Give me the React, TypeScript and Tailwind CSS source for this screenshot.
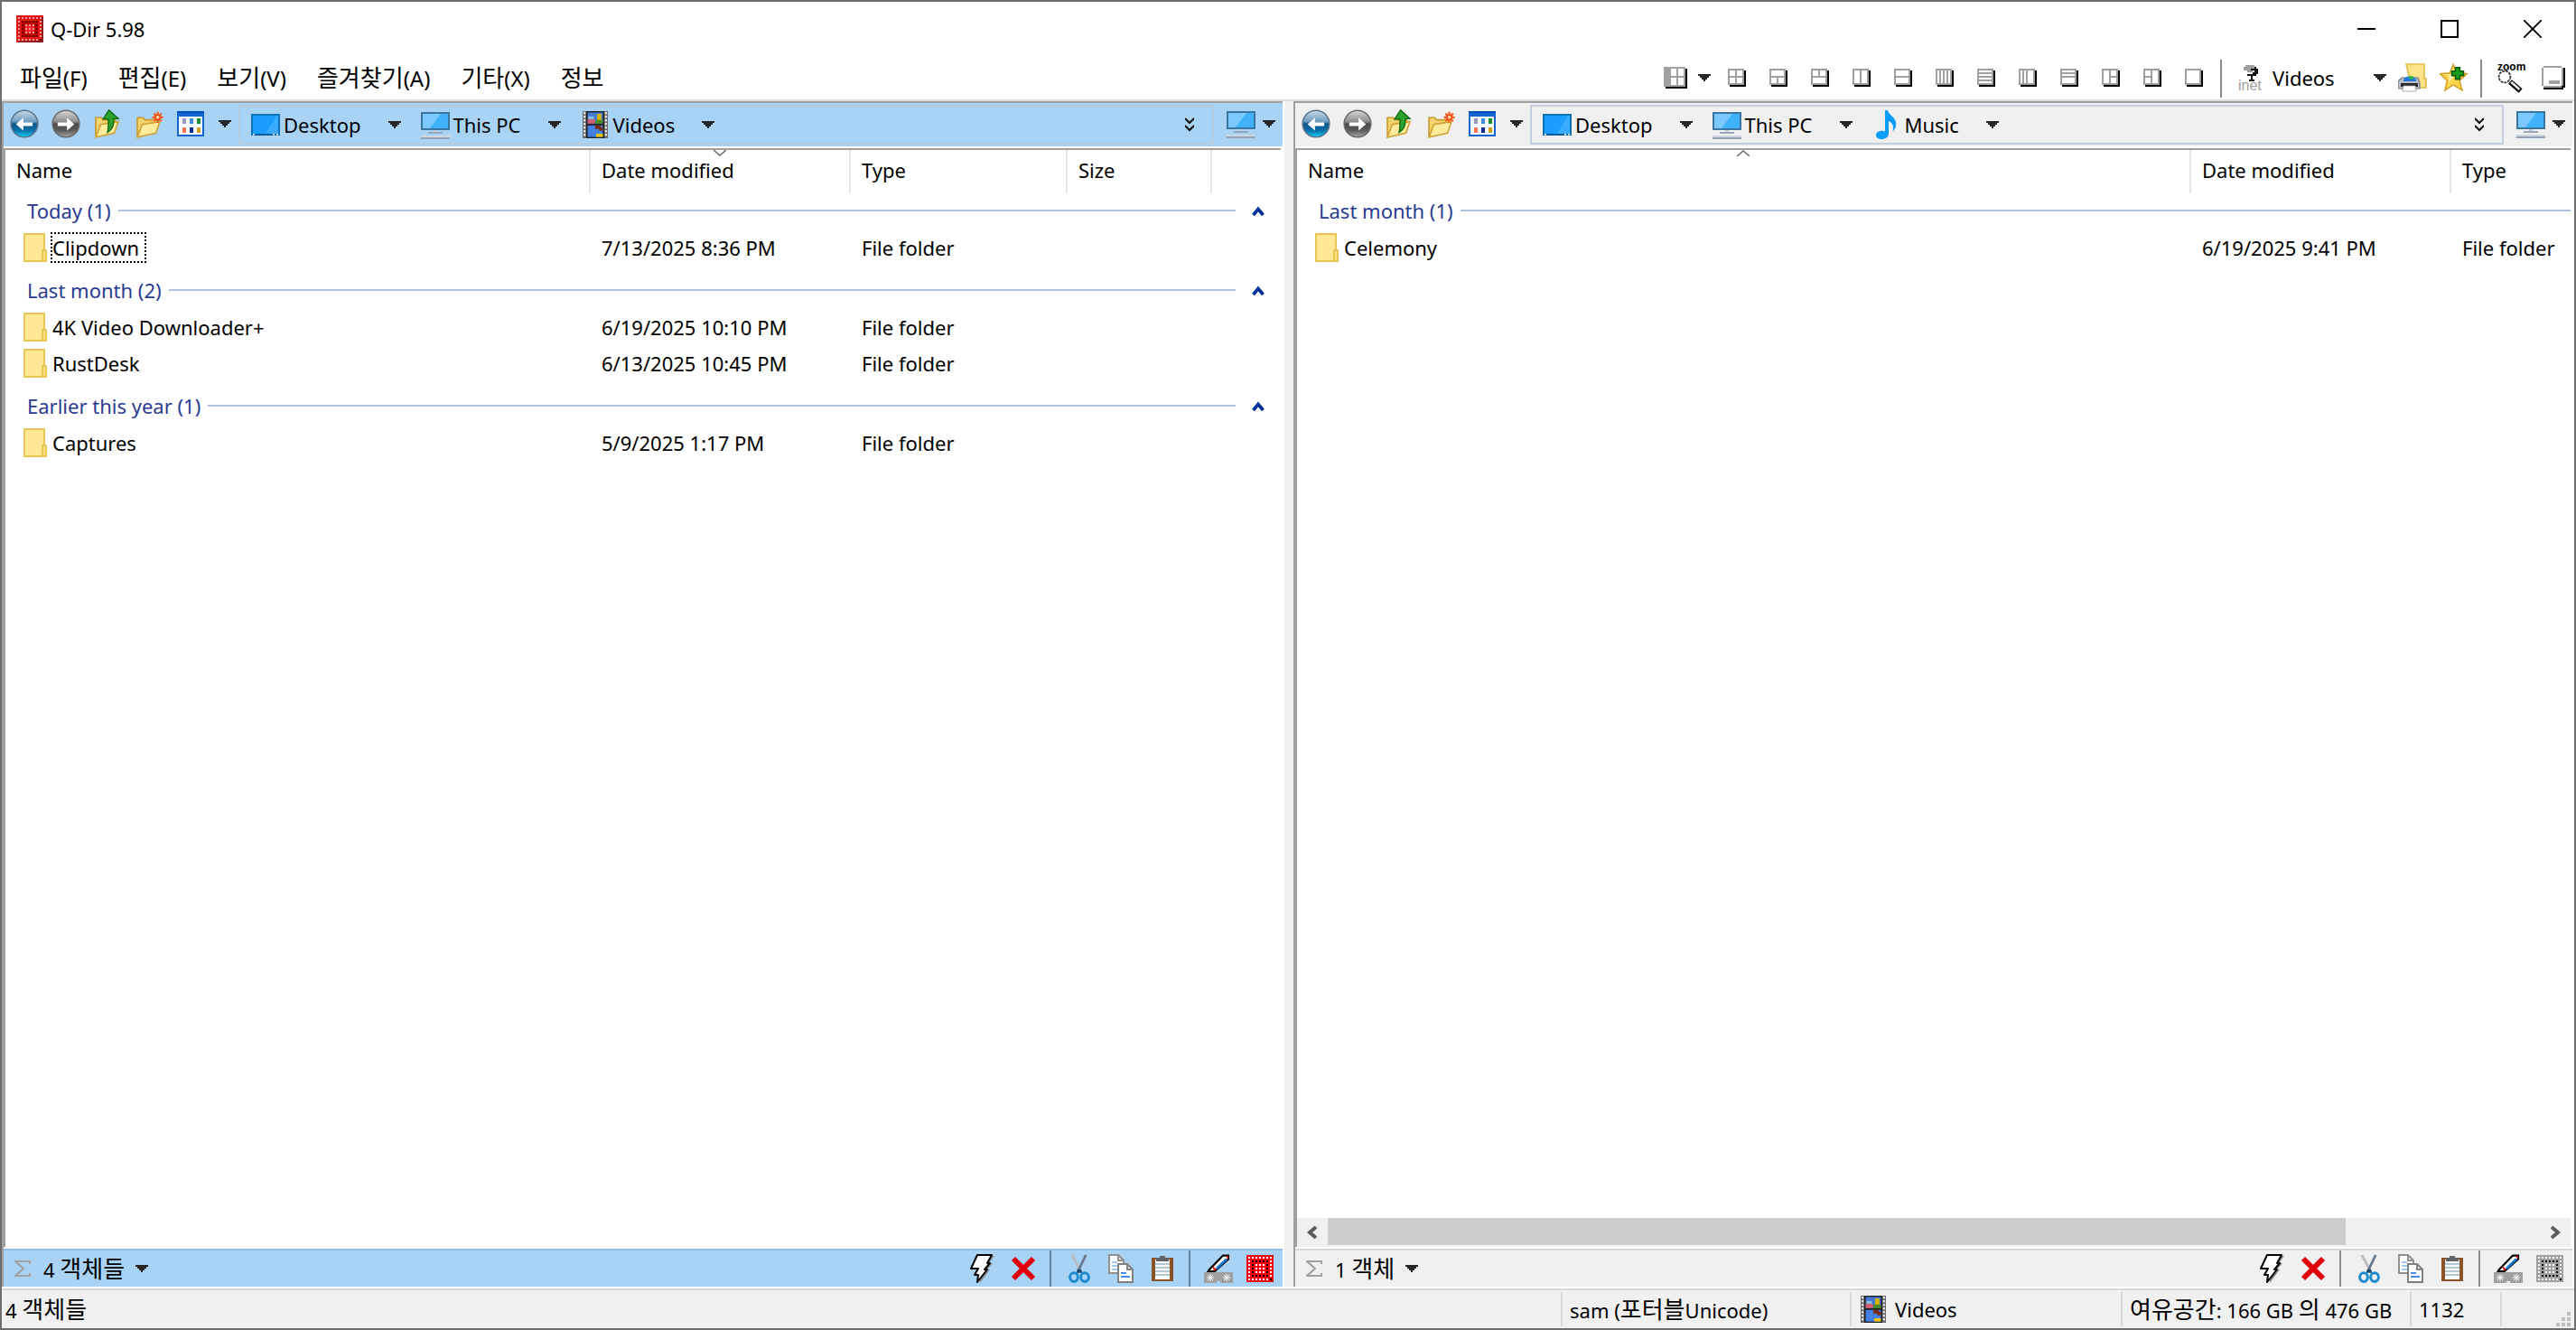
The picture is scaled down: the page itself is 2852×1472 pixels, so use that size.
import type { ReactNode } from "react";

type IconProps = { className?: string };

type FileRow = { name: string; date: string; type: string; focused?: boolean };
type Group = { label: string; rows: FileRow[] };
type Crumb = { label: string; icon: ReactNode };

type PaneProps = {
  active?: boolean;
  crumbs: Crumb[];
  groups: Group[];
  sort: "name" | "date";
  count: ReactNode;
};

/* ---------- icons, drawn on a 16px grid and shown at 32px ---------- */

function Icon({ children, className = "h-8 w-8" }: IconProps & { children: ReactNode }) {
  return (
    <svg viewBox="0 0 16 16" className={`block shrink-0 ${className}`} aria-hidden="true">
      {children}
    </svg>
  );
}

function CaretDown() {
  return (
    <svg viewBox="0 0 7 4" className="block h-2 w-3.5 shrink-0" shapeRendering="crispEdges" aria-hidden="true">
      <path d="M0 0h7v1H0zM1 1h5v1H1zM2 2h3v1H2zM3 3h1v1H3z" fill="#262626" />
    </svg>
  );
}

const DOTS = [1, 3, 5, 7, 9, 11, 13];

function QLogo({ tone }: { tone: "title" | "red" | "gray" }) {
  const back = tone === "gray" ? "#a0a0a0" : tone === "red" ? "#f00008" : "#e01414";
  const light = tone === "title" ? "#ff9a9a" : "#ffffff";
  const dark = tone === "title" ? "#7a0000" : "#000000";
  const fill = (x: number, y: number) => {
    if (x === 13 && y === 13) return dark;
    if (x === 1 || x === 13 || y === 1 || y === 13) return light;
    if (x === 3 || x === 11 || y === 3 || y === 11) return dark;
    return light;
  };
  return (
    <svg viewBox="0 0 15 15" className="block h-[30px] w-[30px] shrink-0" shapeRendering="crispEdges" aria-hidden="true">
      <rect width="15" height="15" fill={back} />
      {tone === "title" && (
        <>
          <path d="M3 3h9v9H3z" fill="#b00000" />
          <path d="M5 5h5v5H5z" fill="#f02020" />
          <path d="M14 1h1v14H1v-1h13z" fill="#8c2020" />
        </>
      )}
      {DOTS.map((y) =>
        DOTS.map((x) => <rect key={`${x}-${y}`} x={x} y={y} width="1" height="1" fill={fill(x, y)} />)
      )}
    </svg>
  );
}

function BackIcon() {
  return (
    <Icon>
      <defs>
        <linearGradient id="back" x1="0" y1="0" x2="0" y2="1">
          <stop offset="0" stopColor="#c9dbe8" />
          <stop offset="0.42" stopColor="#6c9cc0" />
          <stop offset="0.5" stopColor="#0d5688" />
          <stop offset="0.75" stopColor="#0a70a8" />
          <stop offset="1" stopColor="#10d4ff" />
        </linearGradient>
      </defs>
      <circle cx="8" cy="8" r="7.4" fill="url(#back)" stroke="#5b7488" strokeWidth="0.8" />
      <path d="M3.4 8.2 7.4 4.6v2.6h5.2v2H7.4v2.6z" fill="#fff" />
    </Icon>
  );
}

function ForwardIcon() {
  return (
    <Icon>
      <defs>
        <linearGradient id="forward" x1="0" y1="0" x2="0" y2="1">
          <stop offset="0" stopColor="#d8d8d8" />
          <stop offset="0.42" stopColor="#8c8c8c" />
          <stop offset="0.5" stopColor="#4a4a4a" />
          <stop offset="0.75" stopColor="#5c5c5c" />
          <stop offset="1" stopColor="#a8a8a8" />
        </linearGradient>
      </defs>
      <circle cx="8" cy="8" r="7.4" fill="url(#forward)" stroke="#6a6a6a" strokeWidth="0.8" />
      <path d="M12.6 8.2 8.6 4.6v2.6H3.4v2h5.2v2.6z" fill="#fff" />
    </Icon>
  );
}

function OpenFolder() {
  return (
    <>
      <path d="M1.5 15.3V4.6h3.2l1 1.2h6.6v3" fill="#f3d36b" stroke="#c99a2c" strokeWidth="0.8" />
      <path d="M1.6 15.4 4.2 8.4l9.8-1.6-2.2 6.4z" fill="#ffeb9c" stroke="#cfa136" strokeWidth="0.8" />
    </>
  );
}

function UpIcon() {
  return (
    <Icon>
      <OpenFolder />
      <path d="M8.8 0.4 14 5.2h-2.6c.2 3.6-.4 5.8-3.4 7.6.6-2.6.6-4.6.4-7.4H5.6z" fill="#2da32d" stroke="#126b12" strokeWidth="0.7" />
    </Icon>
  );
}

function NewFolderIcon() {
  return (
    <Icon>
      <OpenFolder />
      <g stroke="#ff5a1e" strokeWidth="1.1">
        <path d="M12.8 1.4v6M9.8 4.4h6M10.7 2.3l4.2 4.2M14.9 2.3l-4.2 4.2" />
      </g>
      <circle cx="12.8" cy="4.4" r="1.3" fill="#ffd09a" stroke="#e83c10" strokeWidth="0.6" />
    </Icon>
  );
}

function ViewIcon() {
  const cells = [
    ["#9a9ac8", 3, 5],
    ["#3c8ce0", 7, 5],
    ["#109030", 11, 5],
    ["#ff7850", 3, 10],
    ["#102c90", 7, 10],
    ["#d0a018", 11, 10]
  ] as const;
  return (
    <svg viewBox="0 0 15 14" className="block h-7 w-[30px] shrink-0" shapeRendering="crispEdges" aria-hidden="true">
      <rect width="15" height="14" fill="#1464d0" />
      <rect x="1" y="3" width="13" height="10" fill="#f4f9ff" />
      <rect width="15" height="1" fill="#0050c0" />
      {cells.map(([color, x, y]) => (
        <rect key={color} x={x} y={y - 1} width="2" height="3" fill={color} />
      ))}
    </svg>
  );
}

function DesktopIcon() {
  return (
    <Icon>
      <rect x="0.5" y="2.5" width="15" height="11" fill="#1a9dfc" stroke="#0b72b8" />
      <path d="M8 13 14 3h1v10z" fill="#38adff" />
      <path d="M1 13h14v1H1z" fill="#0a5c9c" />
      <path d="M1 13h1v.8H1zM12 13h1v.8h-1zM14 13h1v.8h-1z" fill="#fff" />
    </Icon>
  );
}

function MonitorIcon() {
  return (
    <Icon>
      <rect x="0.5" y="1.5" width="15" height="9" fill="#3fb2fb" stroke="#3a76a0" />
      <path d="M1 2h10L5 10H1z" fill="#7cc9ff" />
      <path d="M7 11h2v1H7z" fill="#c4ccd6" />
      <path d="M4 12h8v1H4z" fill="#98a8bc" />
      <path d="M0 14h16v1H0z" fill="#cfd6de" />
      <path d="M0 15h16v1H0z" fill="#94a4b8" />
    </Icon>
  );
}

function FilmIcon() {
  const holes = [1, 3, 5, 7, 9, 11, 13];
  return (
    <Icon>
      <rect x="1" y="0.500" width="14" height="15" fill="#6a6a6a" />
      <rect x="3" y="0.500" width="10" height="15" fill="#222" />
      {holes.map((y) => (
        <g key={y} fill="#f0f0f0">
          <rect x="1.600" y={y} width="1" height="1.200" />
          <rect x="13.400" y={y} width="1" height="1.200" />
        </g>
      ))}
      <rect x="3.800" y="1.200" width="8.400" height="6.200" fill="#4478d4" />
      <rect x="3.800" y="8.400" width="8.400" height="6.400" fill="#4480e4" />
      <path d="M3.800 5h4v2.400h-4z" fill="#d06070" />
      <path d="M4.200 3.400h3v1.600h-3z" fill="#8cc0e0" />
      <path d="M9 2h2.400v4H9z" fill="#d8b400" />
      <path d="M8 5.400h4.200v2H8z" fill="#4a8c20" />
      <path d="M8 8.400h3v1h1.200v2h-2v-1H8z" fill="#7a2c10" />
      <path d="M8.500 13h3.700v1.800H8.500z" fill="#ecc400" />
    </Icon>
  );
}

function MusicIcon() {
  return (
    <Icon>
      <path
        d="M7 0h1.500c.2 2.500 4.600 3.600 4.600 7.600 0 2-.8 3.200-1.900 4.200.6-2.600.5-4.400-2.200-5.800V13c0 1.800-1.700 3-3.900 3C3.400 16 2 15.200 2 13.900 2 12.300 3.600 11.400 5.400 11.400c.6 0 1.200.1 1.600.3z"
        fill="#0a9cff"
      />
    </Icon>
  );
}

function FolderIcon() {
  return (
    <svg viewBox="0 0 13 16" className="block h-8 w-[26px] shrink-0" shapeRendering="crispEdges" aria-hidden="true">
      <path d="M0 0h12v9h1v7H0z" fill="#e8c654" />
      <path d="M1 1h10v8h-1v6H1z" fill="#ffe795" />
      <path d="M11 10h1v5h-1z" fill="#ffe081" />
    </svg>
  );
}

/* window layout pickers: each path is the set of inner split lines */
const LAYOUTS = [
  { title: "4 panes", lines: "M4 1h1v7H4zM1 4h7v1H1z" },
  { title: "3 panes, split bottom", lines: "M1 4h7v1H1zM4 5h1v3H4z" },
  { title: "3 panes, split top", lines: "M1 4h7v1H1zM4 1h1v3H4z" },
  { title: "2 panes, side by side", lines: "M4 1h1v7H4z" },
  { title: "2 panes, stacked", lines: "M1 4h7v1H1z" },
  { title: "4 columns", lines: "M2 1h1v7H2zM4 1h1v7H4zM6 1h1v7H6z" },
  { title: "4 rows", lines: "M1 2h7v1H1zM1 4h7v1H1zM1 6h7v1H1z" },
  { title: "3 columns", lines: "M2 1h1v7H2zM4 1h1v7H4z" },
  { title: "3 rows", lines: "M1 2h7v1H1zM1 4h7v1H1z" },
  { title: "3 panes, split right", lines: "M4 1h1v7H4zM5 4h3v1H5z" },
  { title: "3 panes, split left", lines: "M4 1h1v7H4zM1 4h3v1H1z" },
  { title: "1 pane", lines: "" }
];

function LayoutIcon({ lines }: { lines: string }) {
  return (
    <svg viewBox="0 0 10 10" className="block h-5 w-5" shapeRendering="crispEdges" aria-hidden="true">
      <path d="M1 1h9v9H1z" fill="#000" />
      <path d="M0 0h9v9H0z" fill="#a0a0a0" />
      <path d="M1 1h7v7H1z" fill="#fff" />
      <path d={lines} fill="#a0a0a0" />
    </svg>
  );
}

function TreeLayoutIcon() {
  return (
    <svg viewBox="0 0 13 12" className="block h-6 w-[26px]" shapeRendering="crispEdges" aria-hidden="true">
      <path d="M1 1h12v11H1z" fill="#000" />
      <path d="M0 0h12v11H0z" fill="#a0a0a0" />
      <path d="M4 1h3v4H4zM8 1h3v4H8zM4 6h3v4H4zM8 6h3v4H8z" fill="#fff" />
    </svg>
  );
}

function InetIcon() {
  return (
    <svg viewBox="0 0 16 16" className="block h-8 w-8 shrink-0 overflow-visible" aria-hidden="true">
      <path d="M5 1h5v1h1v2H9v1H6V4H4V2h1z" fill="#a0a0a0" shapeRendering="crispEdges" />
      <path d="M10 2h1v1h1v3h-1v1H9v1H8V7H6V6h3V5h1V4H8V3h2zM8 8h1v1h1v1H7V9h1z" fill="#111" shapeRendering="crispEdges" />
      <text x="1" y="15" fontSize="8" fill="#a0a0a0" fontFamily="Liberation Sans, sans-serif">
        inet
      </text>
    </svg>
  );
}

function PrinterFolderIcon() {
  return (
    <Icon>
      <path d="M4.500 0.500h10v8h1v5h-8z" fill="#ffe387" stroke="#e0bc4c" strokeWidth="0.8" />
      <path d="M2 8h9l1 3v3H0v-4z" fill="#b8bcc4" stroke="#70747c" strokeWidth="0.6" />
      <path d="M3 9c1-2.400 6-2.400 7 0v1H3z" fill="#2478e0" />
      <path d="M6 7.200h2.500v1.600H6z" fill="#28b450" />
      <path d="M1.500 11h9.500v2H1.500z" fill="#282828" />
      <path d="M3 12.500h6.500l.6 3H2.400z" fill="#fff" stroke="#9c9c9c" strokeWidth="0.4" />
    </Icon>
  );
}

function StarPlusIcon() {
  return (
    <Icon>
      <path
        d="M7.600 0.600 9.500 5.400l5.700.4-4.200 3.800 1.500 5.400-4.900-3-4.700 3 1.300-5.400L0.200 5.800l5.500-.4z"
        fill="#ffd54a"
        stroke="#d09a20"
        strokeWidth="0.7"
      />
      <path d="M7.500 2.500 8.600 6.600 5 10.400l.4-3.600L2 6.200l4.400-.2z" fill="#fff4b8" />
      <path d="M8.800 2.400h2.400v2h2v2.400h-2v2H8.800v-2h-2V4.400h2z" fill="#18a018" stroke="#0a580a" strokeWidth="0.8" />
    </Icon>
  );
}

function ZoomIcon() {
  return (
    <svg viewBox="0 0 16 16" className="block h-8 w-8 shrink-0 overflow-visible" aria-hidden="true">
      <text x="0" y="4" fontSize="6" fontWeight="700" fill="#000" fontFamily="Liberation Sans, sans-serif">
        zoom
      </text>
      <circle cx="4" cy="7.500" r="3.200" fill="#fff" stroke="#333" strokeWidth="0.9" strokeDasharray="1.4 0.5" />
      <path d="m7 10.200 5.800 5" stroke="#000" strokeWidth="3" />
      <path d="m7.600 10.400 4.600 4.100" stroke="#e8e8e8" strokeWidth="1.3" />
    </svg>
  );
}

function TrayIcon() {
  return (
    <svg viewBox="0 0 13 13" className="block h-[26px] w-[26px]" shapeRendering="crispEdges" aria-hidden="true">
      <path d="M2 1h11v11h-1v1H1v-2h1z" fill="#000" />
      <path d="M1 0h10v1h1v10h-1v1H1v-1H0V1h1z" fill="#a0a0a0" />
      <path d="M1 1h10v10H1z" fill="#fff" />
      <path d="M4 8h6v2H4z" fill="#a0a0a0" />
    </svg>
  );
}

function BoltIcon() {
  return (
    <Icon>
      <path d="M7 1h8l-3 4h2l-3 3.500h1.500L7 16z" fill="#8c8c8c" />
      <path
        d="M5.500 0.500h8L11 5h1.500L9.500 8.500H11L5.500 15.500 6 11.500H4l2-3.500H2z"
        fill="#fff"
        stroke="#000"
        strokeWidth="1"
        strokeLinejoin="round"
      />
    </Icon>
  );
}

function DeleteIcon() {
  return (
    <Icon>
      <path d="m2.500 2.500 11 11M13.500 2.500l-11 11" stroke="#e0000c" strokeWidth="3" />
    </Icon>
  );
}

function CutIcon() {
  return (
    <Icon>
      <path d="M4 0.500 9 10" stroke="#b8bcc0" strokeWidth="1.400" />
      <path d="M11.600 0.500 7 10" stroke="#68788c" strokeWidth="1.400" />
      <path d="M7 8.400h2l.6 2H6.400z" fill="#1c4c74" />
      <ellipse cx="5" cy="12.800" rx="2.200" ry="2.400" fill="none" stroke="#1c8cd0" strokeWidth="1.500" />
      <ellipse cx="11" cy="12.800" rx="2.200" ry="2.400" fill="none" stroke="#1c8cd0" strokeWidth="1.500" />
    </Icon>
  );
}

function CopyIcon() {
  return (
    <Icon>
      <path d="M1.500 0.500h5l3 3v7h-8z" fill="#fff" stroke="#909090" />
      <path d="M6.500 0.500v3h3" fill="none" stroke="#909090" />
      <path d="M3 4.500h3M3 6.500h5M3 8.500h4" stroke="#a8c8f4" />
      <path d="M6.500 5.500h5l3 3v7h-8z" fill="#fff" stroke="#808080" />
      <path d="M11.500 5.500v3h3" fill="none" stroke="#808080" />
      <path d="M8 10.500h3M8 12.500h5" stroke="#4c8cf0" />
    </Icon>
  );
}

function PasteIcon() {
  return (
    <Icon>
      <rect x="2" y="2" width="12" height="13" fill="#8a5426" />
      <rect x="4" y="3" width="8" height="11" fill="#f8fafc" />
      <path d="M4 5.500h8M4 7.500h8M4 9.500h8M4 11.500h8" stroke="#b4c8d4" strokeWidth="0.9" />
      <path d="M4.500 2h2V1h3v1h2v2h-7z" fill="#606468" />
    </Icon>
  );
}

function PencilIcon() {
  return (
    <Icon>
      <path d="M3 8.500 10.500 0.800h3v2L6 9.500H2.400z" fill="#fff" stroke="#000" strokeWidth="1.100" />
      <path d="m7 8 5.500-5.200" stroke="#1478d0" strokeWidth="1.400" />
      <path d="M11.800 1h1.600v1.800zM4.600 6.500 7 8.400l-1.500 1z" fill="#e01818" />
      <path d="M0 10h16v6H9v-1H7v1H0z" fill="#a0a0a0" />
      <path
        d="M1.500 13h4M3.500 11v4M2 11.500l3 3M5 11.500l-3 3M10.500 13h4M12.500 11v4M11 11.500l3 3M14 11.500l-3 3"
        stroke="#fff"
        strokeWidth="0.5"
      />
    </Icon>
  );
}

function SigmaIcon() {
  return (
    <svg viewBox="0 0 9 9" className="block h-[18px] w-[18px] shrink-0" aria-hidden="true">
      <path d="M8.500 2V0.500h-8L5 4.500l-4.500 4h8V7" fill="none" stroke="#a0a0a0" strokeWidth="1" />
    </svg>
  );
}

function Grip() {
  return (
    <svg viewBox="0 0 8 8" className="block h-4 w-4" shapeRendering="crispEdges" aria-hidden="true">
      <path d="M6 0h2v2H6zM6 3h2v2H6zM3 3h2v2H3zM6 6h2v2H6zM3 6h2v2H3zM0 6h2v2H0z" fill="#bfbfbf" />
    </svg>
  );
}

/* ---------- small parts ---------- */

// Hangul runs a little larger than the Latin text beside it
function Ko({ children }: { children: ReactNode }) {
  return <span className="text-[26px]">{children}</span>;
}

function ToolButton({ title, children }: { title: string; children: ReactNode }) {
  return (
    <button type="button" aria-label={title} className="flex w-[46px] shrink-0 items-center justify-center">
      {children}
    </button>
  );
}

const MENU: [string, string][] = [
  ["파일", "(F)"],
  ["편집", "(E)"],
  ["보기", "(V)"],
  ["즐겨찾기", "(A)"],
  ["기타", "(X)"],
  ["정보", ""]
];

function TitleBar() {
  return (
    <header className="flex h-15 items-center pl-4">
      <QLogo tone="title" />
      <h1 className="flex-1 pl-2">Q-Dir 5.98</h1>
      <button type="button" aria-label="Minimize" className="flex h-full w-23 items-center justify-center">
        <svg viewBox="0 0 20 20" className="h-5 w-5"><path d="M0 9h20v2H0z" /></svg>
      </button>
      <button type="button" aria-label="Maximize" className="flex h-full w-23 items-center justify-center">
        <svg viewBox="0 0 20 20" className="h-5 w-5"><path d="M1 1h18v18H1z" fill="none" stroke="#000" strokeWidth="2" /></svg>
      </button>
      <button type="button" aria-label="Close" className="flex h-full w-23 items-center justify-center">
        <svg viewBox="0 0 20 20" className="h-5 w-5"><path d="m0 0 20 20M20 0 0 20" stroke="#000" strokeWidth="1.800" /></svg>
      </button>
    </header>
  );
}

function MenuBar() {
  return (
    <div className="flex h-12 items-stretch justify-between">
      <nav className="flex items-center gap-[34px] pl-5">
        {MENU.map(([label, key]) => (
          <button key={label} type="button" className="text-2xl leading-8 whitespace-nowrap">
            <Ko>{label}</Ko>
            {key}
          </button>
        ))}
      </nav>
      <div className="flex items-stretch">
        <button type="button" aria-label="Tree layout" className="flex items-center gap-3 pr-1.5">
          <TreeLayoutIcon />
          <CaretDown />
        </button>
        {LAYOUTS.map((layout) => (
          <ToolButton key={layout.title} title={layout.title}>
            <LayoutIcon lines={layout.lines} />
          </ToolButton>
        ))}
        <span className="mt-1 mr-2 mb-0.5 ml-1.5 w-0.5 bg-[#8c8c8c]" />
        <button type="button" className="flex w-[180px] items-center pr-1.5 pl-2">
          <InetIcon />
          <span className="flex-1 pl-2 text-left">Videos</span>
          <CaretDown />
        </button>
        <ToolButton title="Print folder"><PrinterFolderIcon /></ToolButton>
        <ToolButton title="Add to favorites"><StarPlusIcon /></ToolButton>
        <span className="mt-1 mr-2.5 mb-0.5 ml-1.5 w-0.5 bg-[#8c8c8c]" />
        <ToolButton title="Magnifier"><ZoomIcon /></ToolButton>
        <ToolButton title="To tray"><TrayIcon /></ToolButton>
      </div>
    </div>
  );
}

function AddressBar({ crumbs, active }: { crumbs: Crumb[]; active?: boolean }) {
  return (
    <div className={`flex h-12 items-stretch pb-0.5 ${active ? "bg-[#a8d3f5]" : "bg-[#f0f0f0]"}`}>
      <ToolButton title="Back"><BackIcon /></ToolButton>
      <ToolButton title="Forward"><ForwardIcon /></ToolButton>
      <ToolButton title="Up"><UpIcon /></ToolButton>
      <ToolButton title="New folder"><NewFolderIcon /></ToolButton>
      <ToolButton title="View"><ViewIcon /></ToolButton>
      <button type="button" aria-label="View options" className="flex w-[30px] items-center justify-center">
        <CaretDown />
      </button>
      <div
        className={`mt-0.5 flex flex-1 items-center border-2 pl-3 ${
          active ? "border-[#b2cce2]" : "border-[#c2cedb]"
        }`}
      >
        {crumbs.map((crumb) => (
          <button key={crumb.label} type="button" className="flex items-center pr-[22px] whitespace-nowrap">
            {crumb.icon}
            <span className="pr-[30px] pl-1">{crumb.label}</span>
            <CaretDown />
          </button>
        ))}
        <button type="button" aria-label="Previous locations" className="ml-auto pr-5">
          <svg viewBox="0 0 5 8" className="block h-4 w-2.5" aria-hidden="true">
            <path d="M0 .5 2.500 3 5 .5M0 4.500 2.500 7 5 4.500" fill="none" stroke="#111" strokeWidth="1" />
          </svg>
        </button>
      </div>
      <button type="button" aria-label="Drives" className="flex w-19 items-center gap-2 pl-3.5">
        <MonitorIcon />
        <CaretDown />
      </button>
    </div>
  );
}

function SortMark({ up }: { up?: boolean }) {
  return (
    <svg viewBox="0 0 14 7" className="absolute top-0 left-1/2 h-[7px] w-3.5 -translate-x-1/2" aria-hidden="true">
      <path d={up ? "M0 7 7 1l7 6" : "M0 0l7 6 7-6"} fill="none" stroke="#6c6c6c" strokeWidth="1.500" />
    </svg>
  );
}

function FileTable({ groups, sort }: { groups: Group[]; sort: "name" | "date" }) {
  const th = "relative h-12 border-r-2 border-[#e5e5e5] pb-1 pl-3 text-left font-normal last:border-r-0";
  // the wide name column leaves no room for the size column
  const wide = sort === "name";
  return (
    <table className="w-full table-fixed border-separate border-spacing-0">
      <colgroup>
        <col className={wide ? "w-[990px]" : "w-[648px]"} />
        <col className="w-[288px]" />
        {wide ? (
          <col />
        ) : (
          <>
            <col className="w-[240px]" />
            <col className="w-[160px]" />
            <col />
          </>
        )}
      </colgroup>
      <thead>
        <tr>
          <th className={th}>Name{wide && <SortMark up />}</th>
          <th className={th}>Date modified{!wide && <SortMark />}</th>
          <th className={th}>Type</th>
          {!wide && <th className={th}>Size</th>}
          {!wide && <td />}
        </tr>
      </thead>
      {groups.map((group) => (
        <tbody key={group.label}>
          <tr>
            <th colSpan={wide ? 3 : 5} className="h-10 p-0 font-normal">
              <div className={`flex items-center pb-0.5 pl-6 text-[#2a3a8f] ${wide ? "" : "gap-[18px] pr-[18px]"}`}>
                <div className="flex flex-1 items-center gap-2">
                  <span className="whitespace-nowrap">{group.label}</span>
                  <span className="h-0.5 flex-1 bg-[#b0bfdc]" />
                </div>
                {!wide && (
                  <button type="button" aria-label={`Collapse ${group.label}`}>
                    <svg viewBox="0 0 7 7" className="block h-3.5 w-3.5" aria-hidden="true">
                      <path d="M.8 6 3.500 2.700 6.200 6" fill="none" stroke="#003399" strokeWidth="1.900" />
                    </svg>
                  </button>
                )}
              </div>
            </th>
          </tr>
          {group.rows.map((row) => (
            <tr key={row.name}>
              <td className="h-10 p-0 pl-5">
                <div className="flex items-center">
                  <FolderIcon />
                  <span
                    className={`ml-1 border-2 border-dotted leading-[30px] ${
                      row.focused ? "border-black pr-1.5" : "border-transparent"
                    }`}
                  >
                    {row.name}
                  </span>
                </div>
              </td>
              <td className="p-0 pl-3">{row.date}</td>
              <td className="p-0 pl-3 whitespace-nowrap">{row.type}</td>
            </tr>
          ))}
          <tr aria-hidden="true">
            <td className="h-2 p-0" />
          </tr>
        </tbody>
      ))}
    </table>
  );
}

function ScrollBar() {
  return (
    <div className="flex h-8 items-stretch bg-[#f0f0f0]">
      <button type="button" aria-label="Scroll left" className="flex w-[34px] items-center justify-center">
        <svg viewBox="0 0 12 14" className="h-3.5 w-3"><path d="M10 1 3 7l7 6" fill="none" stroke="#5c5c5c" strokeWidth="4" /></svg>
      </button>
      <div className="flex-1">
        <div className="h-[30px] w-[84%] bg-[#cdcdcd]" />
      </div>
      <button type="button" aria-label="Scroll right" className="flex w-[34px] items-center justify-center">
        <svg viewBox="0 0 12 14" className="h-3.5 w-3"><path d="m2 1 7 6-7 6" fill="none" stroke="#5c5c5c" strokeWidth="4" /></svg>
      </button>
    </div>
  );
}

function PaneFooter({ active, count }: { active?: boolean; count: ReactNode }) {
  const sep = `mr-2 ml-1.5 w-0.5 ${active ? "bg-[#64839b]" : "bg-[#8c8c8c]"}`;
  return (
    <footer
      className={`mt-0.5 flex h-[42px] items-stretch border-t-2 pr-0.5 ${
        active ? "border-[#93bde0] bg-[#a8d3f5]" : "border-[#d7d7d7] bg-[#f0f0f0]"
      }`}
    >
      <div className="flex flex-1 items-center pl-3">
        <SigmaIcon />
        <button type="button" className="flex items-center gap-3 pl-3.5 whitespace-nowrap">
          <span>{count}</span>
          <CaretDown />
        </button>
      </div>
      <ToolButton title="Quick actions"><BoltIcon /></ToolButton>
      <ToolButton title="Delete"><DeleteIcon /></ToolButton>
      <span className={sep} />
      <ToolButton title="Cut"><CutIcon /></ToolButton>
      <ToolButton title="Copy"><CopyIcon /></ToolButton>
      <ToolButton title="Paste"><PasteIcon /></ToolButton>
      <span className={sep} />
      <ToolButton title="Rename"><PencilIcon /></ToolButton>
      <ToolButton title="Q-Dir"><QLogo tone={active ? "red" : "gray"} /></ToolButton>
    </footer>
  );
}

function Pane({ active, crumbs, groups, sort, count }: PaneProps) {
  return (
    <section className="flex min-w-0 flex-1 flex-col border-t-2 border-l-2 border-[#a0a0a0] bg-white">
      <AddressBar crumbs={crumbs} active={active} />
      <div className="mt-0.5 mr-0.5 flex min-h-0 flex-1 flex-col border-t-2 border-l-2 border-[#a0a0a0]">
        <div className="min-h-0 flex-1 overflow-hidden">
          <FileTable groups={groups} sort={sort} />
        </div>
        {!active && <ScrollBar />}
      </div>
      <PaneFooter active={active} count={count} />
    </section>
  );
}

function StatusBar() {
  const cell = "my-0.5 flex shrink-0 items-center border-l-2 border-[#d7d7d7] pl-2 whitespace-nowrap";
  return (
    <div className="mt-0.5 flex h-11 items-stretch border-t-2 border-[#d7d7d7] bg-[#f0f0f0]">
      <div className="flex flex-1 items-center pl-1">
        <span>4 <Ko>객체들</Ko></span>
      </div>
      <div className={`${cell} w-[320px]`}>
        <span>sam (<Ko>포터블</Ko>Unicode)</span>
      </div>
      <div className={`${cell} w-[300px] gap-2`}>
        <FilmIcon />
        <span>Videos</span>
      </div>
      <div className={`${cell} w-[320px]`}>
        <span><Ko>여유공간</Ko>: 166 GB <Ko>의</Ko> 476 GB</span>
      </div>
      <div className={`${cell} w-[100px]`}>1132</div>
      <div className={`${cell} w-[82px] items-end justify-end pr-1`}>
        <Grip />
      </div>
    </div>
  );
}

const VIDEO_GROUPS: Group[] = [
  {
    label: "Today (1)",
    rows: [{ name: "Clipdown", date: "7/13/2025 8:36 PM", type: "File folder", focused: true }]
  },
  {
    label: "Last month (2)",
    rows: [
      { name: "4K Video Downloader+", date: "6/19/2025 10:10 PM", type: "File folder" },
      { name: "RustDesk", date: "6/13/2025 10:45 PM", type: "File folder" }
    ]
  },
  {
    label: "Earlier this year (1)",
    rows: [{ name: "Captures", date: "5/9/2025 1:17 PM", type: "File folder" }]
  }
];

const MUSIC_GROUPS: Group[] = [
  {
    label: "Last month (1)",
    rows: [{ name: "Celemony", date: "6/19/2025 9:41 PM", type: "File folder" }]
  }
];

export default function App() {
  return (
    <div className="flex h-screen flex-col border-2 border-[#6e6e6e] bg-white font-['Noto_Sans','Noto_Sans_CJK_KR',sans-serif] text-[22px] leading-8 text-black">
      <TitleBar />
      <MenuBar />
      <div className="h-0.5 shrink-0 bg-[#dcdcdc]" />
      <main className="flex min-h-0 flex-1">
        <Pane
          active
          sort="date"
          crumbs={[
            { label: "Desktop", icon: <DesktopIcon /> },
            { label: "This PC", icon: <MonitorIcon /> },
            { label: "Videos", icon: <FilmIcon /> }
          ]}
          groups={VIDEO_GROUPS}
          count={<>4 <Ko>객체들</Ko></>}
        />
        <div className="w-3 shrink-0 border-l-2 border-white bg-[#f0f0f0]" />
        <div className="flex min-w-0 flex-1 pr-0.5">
          <Pane
            sort="name"
            crumbs={[
              { label: "Desktop", icon: <DesktopIcon /> },
              { label: "This PC", icon: <MonitorIcon /> },
              { label: "Music", icon: <MusicIcon /> }
            ]}
            groups={MUSIC_GROUPS}
            count={<>1 <Ko>객체</Ko></>}
          />
        </div>
      </main>
      <StatusBar />
    </div>
  );
}
